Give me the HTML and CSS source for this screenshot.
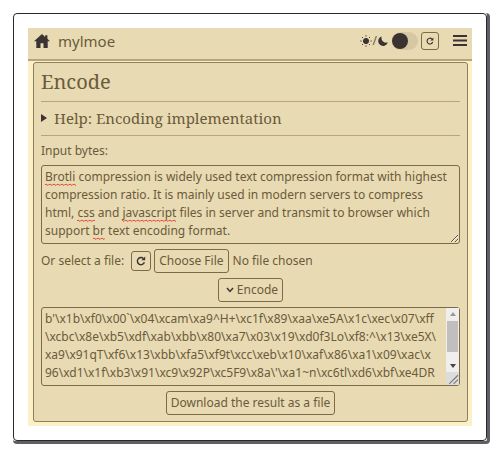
FILE: index.html
```html
<!DOCTYPE html>
<html lang="en">
<head>
<meta charset="utf-8">
<meta name="viewport" content="width=device-width, initial-scale=1">
<title>mylmoe - Encode</title>
<link rel="stylesheet" href="styles.css">
</head>
<body>
<div class="shade">
<div class="frame">
  <div class="page">
    <header class="topbar">
      <a class="brand" href="#">
        <svg class="home" viewBox="0 0 16 14" aria-hidden="true"><path d="M8 0 0 7.2h2.3V14h4.2V9.2h3V14h4.2V7.2H16l-2.6-2.4V1.2h-2.2v1.7z"/></svg>
        <span>mylmoe</span>
      </a>
      <label class="theme">
        <svg class="sun" viewBox="0 0 12 12" aria-hidden="true"><circle cx="6" cy="6" r="2.6"/><path d="M6 .3v1.2M6 10.500v1.2M.3 6h1.2M10.500 6h1.2M2 2l.9.9M9.100 9.100l.9.9M2 10l.9-.9M9.100 2.900l.9-.9"/></svg>
        <span>/</span>
        <svg class="moon" viewBox="0 0 10 10" aria-hidden="true"><path d="M3.600.5A4.8 4.8 0 1 0 9.700 6.2C6.500 8 2.600 4.500 3.600.5z"/></svg>
        <input class="switch" type="checkbox" aria-label="Dark theme">
      </label>
      <button class="icon-button small" type="button" aria-label="Reset theme">
        <svg viewBox="0 0 10 10" aria-hidden="true"><path class="line" d="M8.400 6.2A3.6 3.6 0 1 1 7.4 2.400"/><path d="M9.200.5v3.800H5.400z"/></svg>
      </button>
      <button class="menu" type="button" aria-label="Menu">
        <svg viewBox="0 0 14 11" aria-hidden="true"><path d="M0 1h14M0 5.500h14M0 10h14"/></svg>
      </button>
    </header>
    <main class="panel">
      <h1>Encode</h1>
      <details class="help">
        <summary>Help: Encoding implementation</summary>
      </details>
      <label class="caption" for="input">Input bytes:</label>
      <div class="editor">
        <textarea id="input" class="box" rows="4" spellcheck="false">Brotli compression is widely used text compression format with highest compression ratio. It is mainly used in modern servers to compress html, css and javascript files in server and transmit to browser which support br text encoding format.</textarea>
        <svg class="spelling" aria-hidden="true">
          <defs><pattern id="wave" width="4" height="3" patternUnits="userSpaceOnUse"><path d="M-1 3 1 1 3 2.500 5 .5"/></pattern></defs>
          <rect x="4" y="18" width="31" height="3"/>
          <rect x="36" y="54" width="18" height="3"/>
          <rect x="81" y="54" width="54" height="3"/>
          <rect x="52" y="72" width="12" height="3"/>
        </svg>
      </div>
      <div class="file-row">
        <label for="file">Or select a file:</label>
        <button class="icon-button" type="button" aria-label="Clear file">
          <svg viewBox="0 0 10 10" aria-hidden="true"><path class="line" d="M8.400 6.2A3.6 3.6 0 1 1 7.4 2.400"/><path d="M9.200.5v3.800H5.400z"/></svg>
        </button>
        <input id="file" class="file" type="file">
      </div>
      <button class="button" type="button">
        <svg class="chevron" viewBox="0 0 8 6" aria-hidden="true"><path d="M1 1l3 3.400 3-3.400"/></svg>Encode
      </button>
      <div class="editor">
        <textarea class="box output" rows="4" readonly spellcheck="false" aria-label="Encoded bytes">b'\x1b\xf0\x00`\x04\xcam\xa9^H+\xc1f\x89\xaa\xe5A\x1c\xec\x07\xff
\xcbc\x8e\xb5\xdf\xab\xbb\x80\xa7\x03\x19\xd0f3Lo\xf8:^\x13\xe5X\
xa9\x91qT\xf6\x13\xbb\xfa5\xf9t\xcc\xeb\x10\xaf\x86\xa1\x09\xac\x
96\xd1\x1f\xb3\x91\xc9\x92P\xc5F9\x8a\'\xa1~n\xc6tl\xd6\xbf\xe4DR</textarea>
        <div class="scrollbar" aria-hidden="true">
          <svg class="arrow up" viewBox="0 0 6 4"><path d="M0 4 3 0l3 4z"/></svg>
          <div class="track"><div class="thumb"></div></div>
          <svg class="arrow" viewBox="0 0 6 4"><path d="M0 0h6L3 4z"/></svg>
          <svg class="grip" viewBox="0 0 12 12"><path d="M3 11 11 3M7 11l4-4"/></svg>
        </div>
      </div>
      <button class="button" type="button">Download the result as a file</button>
    </main>
  </div>
</div>
</div>
</body>
</html>
```
FILE: styles.css
```css
* { box-sizing: border-box; }

:root {
  --ink: #6b5a3c;
  --dark: #3b3331;
  --line: #7c6a48;
  --rule: #b6a67c;
  --paper: #e8dab2;
}

body {
  margin: 13px 10px 10px 13px;
  background: #fff;
  color: var(--ink);
  font: 12px/18px "Noto Sans", "Open Sans", sans-serif;
}

button, textarea, input { font: inherit; color: inherit; }

.shade {
  border: solid #606064;
  border-width: 0 3px 3px 0;
  border-radius: 4px;
}

.frame {
  padding: 14px;
  background: #fff;
  border: 1px solid #29292b;
  border-radius: 4px;
}

.page {
  padding-bottom: 4px;
  background: #fbf0c6;
}

.topbar {
  display: flex;
  align-items: center;
  height: 33px;
  padding: 0 5px 6px 6px;
  background: var(--paper);
  border-bottom: 2px solid var(--rule);
}

.brand {
  display: flex;
  align-items: center;
  gap: 8px;
  margin-right: auto;
  color: inherit;
  font-size: 15px;
  text-decoration: none;
}

.home { width: 16px; height: 14px; fill: var(--dark); }

.theme { display: flex; align-items: center; gap: 1px; }
.sun { width: 12px; height: 12px; fill: var(--dark); stroke: var(--dark); }
.moon { width: 10px; height: 10px; fill: var(--dark); }

.switch {
  appearance: none;
  width: 26px;
  height: 18px;
  margin: 0 0 0 3px;
  border-radius: 9px;
  background: #d5c8a3;
}

.switch::before {
  content: "";
  display: block;
  width: 16px;
  height: 16px;
  margin: 1px 0;
  border-radius: 50%;
  background: var(--dark);
}

.icon-button {
  display: grid;
  place-items: center;
  width: 20px;
  height: 20px;
  padding: 0;
  background: none;
  border: 1px solid var(--line);
  border-radius: 3px;
}

.icon-button svg { width: 10px; height: 10px; fill: var(--dark); }
.icon-button .line { fill: none; stroke: var(--dark); stroke-width: 1.4; }
.small { width: 18px; height: 18px; margin-left: 3px; }
.small svg { width: 8px; height: 8px; }

.menu {
  display: grid;
  margin-left: 14px;
  padding: 0;
  background: none;
  border: 0;
}

.menu svg { width: 14px; height: 11px; stroke: var(--dark); stroke-width: 2; }

.panel {
  display: flex;
  flex-direction: column;
  align-items: center;
  gap: 5px;
  margin: 1px 4px 0 5px;
  padding: 0 7px 6px;
  background: var(--paper);
  border: 1px solid #8e7e59;
  border-radius: 3px;
}

h1, .help {
  align-self: stretch;
  margin: 0;
  border-bottom: 1px solid var(--rule);
  font-family: "Noto Serif", "DejaVu Serif", serif;
  font-weight: 400;
}

h1 { padding: 6px 0; font-size: 20px; line-height: 26px; }

.help { padding: 1px 0 7px; font-size: 15px; line-height: 20px; }

.help summary {
  display: flex;
  align-items: center;
  gap: 7px;
}

.help summary::before {
  content: "";
  border: solid transparent;
  border-width: 4px 0 4px 6px;
  border-left-color: var(--dark);
}

.help[open] summary::before { transform: rotate(90deg); }

.caption { align-self: flex-start; padding-top: 1px; }

.editor { position: relative; align-self: stretch; }

.box {
  display: block;
  width: 100%;
  min-height: 79px;
  margin: 0;
  padding: 2px 8px 2px 3px;
  border: 1px solid var(--line);
  border-radius: 3px;
  background: none;
}

.spelling {
  position: absolute;
  inset: 0;
  width: 100%;
  height: 100%;
  fill: url(#wave);
  pointer-events: none;
}

.spelling path { fill: none; stroke: #e84a3c; }

.output { overflow: hidden; white-space: pre; }

.scrollbar {
  position: absolute;
  top: 1px;
  right: 1px;
  bottom: 1px;
  display: flex;
  flex-direction: column;
  align-items: center;
  width: 13px;
  background: #f1efed;
  pointer-events: none;
}

.arrow { width: 6px; height: 4px; margin: 4px 0; fill: #444; }
.up { fill: #999; }
.track { flex: 1; align-self: stretch; padding: 1px; }
.thumb { height: 31px; background: #c1bfbe; }
.grip { width: 13px; height: 13px; background: #dcdcdc; stroke: #777; }

.file-row {
  display: flex;
  align-items: center;
  align-self: stretch;
}

.file-row .icon-button { margin: 0 3px 0 7px; }

.file { flex: 1; min-width: 0; }

.file::file-selector-button {
  margin: 0 4px 0 0;
  padding: 2px 4px;
  font: inherit;
  color: inherit;
  background: none;
  border: 1px solid var(--line);
  border-radius: 3px;
}

.button {
  padding: 2px 4px;
  background: none;
  border: 1px solid var(--line);
  border-radius: 3px;
}

.chevron {
  width: 8px;
  height: 6px;
  margin: 0 3px 1px;
  fill: none;
  stroke: var(--dark);
  stroke-width: 1.5;
}
```
